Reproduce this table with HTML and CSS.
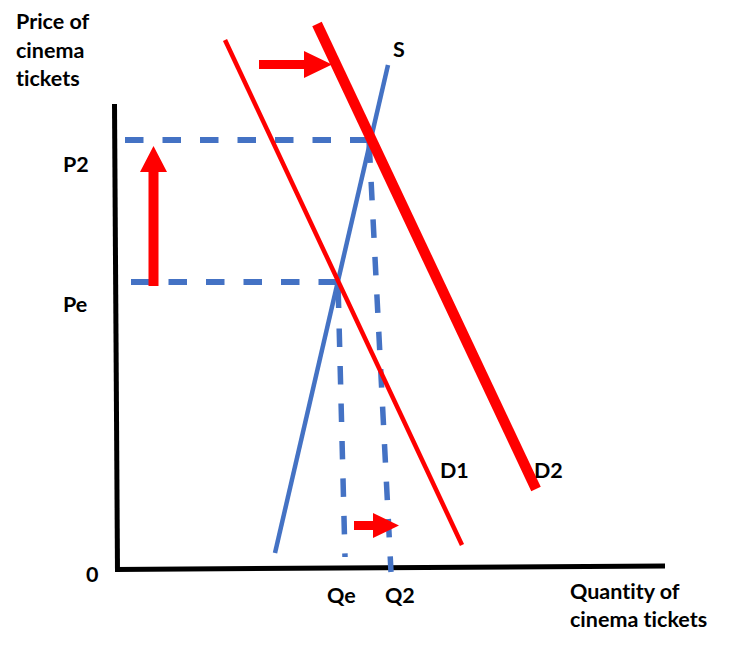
FILE: index.html
```html
<!DOCTYPE html>
<html lang="en">
<head>
<meta charset="utf-8">
<title>Price of cinema tickets</title>
<link rel="stylesheet" href="styles.css">
</head>
<body>
<div class="figure">
<svg class="chart" width="731" height="648" viewBox="0 0 731 648" xmlns="http://www.w3.org/2000/svg">
  <!-- axes -->
  <line class="axis" x1="114.5" y1="104" x2="117.5" y2="572"/>
  <line class="axis" x1="115" y1="569.5" x2="665" y2="566"/>

  <!-- dashed guide lines -->
  <line class="dash-h" x1="125" y1="140" x2="370" y2="140"/>
  <line class="dash-h" x1="131" y1="282" x2="340" y2="282"/>
  <line class="dash-v" x1="338" y1="282" x2="345" y2="557" stroke-dasharray="26 20.5 18.5 19 18.5 19 18.5 19 18.5 19 18.5 19 18.5 19 18.5 19"/>
  <line class="dash-v" x1="369" y1="140" x2="391" y2="572" stroke-dasharray="23 19 18.5 19 18.5 19 18.5 19 18.5 19 18.5 19 18.5 19 18.5 19 18.5 19 18.5 19 18.5 19 18.5 19"/>

  <!-- supply -->
  <line class="supply" x1="275" y1="553" x2="388" y2="65"/>

  <!-- demand curves -->
  <line class="d1" x1="225" y1="40" x2="462" y2="545"/>
  <line class="d2" x1="317" y1="24" x2="536" y2="489"/>

  <!-- arrows -->
  <polygon class="arrow" points="259,60 304,60 304,51 332,64.5 304,78 304,69 259,69"/>
  <polygon class="arrow" points="148.5,286 148.5,172 140,172 153.5,146 167,172 158.5,172 158.5,286"/>
  <polygon class="arrow" points="354,521 373,521 373,513 399,525.5 373,538 373,530 354,530"/>

  <!-- labels -->
  <text class="label" x="16" y="29">Price of</text>
  <text class="label" x="16" y="58">cinema</text>
  <text class="label" x="16" y="86">tickets</text>
  <text class="label" x="63" y="172">P2</text>
  <text class="label" x="63" y="312">Pe</text>
  <text class="label" x="86" y="582">0</text>
  <text class="label" x="327" y="603">Qe</text>
  <text class="label" x="385" y="603">Q2</text>
  <text class="label" x="393" y="57">S</text>
  <text class="label" x="440" y="478">D1</text>
  <text class="label" x="534" y="478">D2</text>
  <text class="label" x="570" y="599">Quantity of</text>
  <text class="label" x="570" y="627">cinema tickets</text>
</svg>
</div>
</body>
</html>
```

FILE: styles.css
```css
html, body {
  margin: 0;
  padding: 0;
  background: #ffffff;
}

.figure {
  width: 731px;
  height: 648px;
  overflow: hidden;
}

.chart {
  display: block;
}

.axis {
  stroke: #000000;
  stroke-width: 5;
}

.dash-h {
  stroke: #4472c4;
  stroke-width: 6;
  stroke-dasharray: 18.5 19;
}

.dash-v {
  stroke: #4472c4;
  stroke-width: 5.5;
}

.supply {
  stroke: #4472c4;
  stroke-width: 4.5;
}

.d1 {
  stroke: #ff0000;
  stroke-width: 4.5;
}

.d2 {
  stroke: #ff0000;
  stroke-width: 10.5;
}

.arrow {
  fill: #ff0000;
}

.label {
  font-family: Lato, "Open Sans", "Liberation Sans", sans-serif;
  font-weight: 700;
  font-size: 21.5px;
  font-variant-ligatures: none;
  fill: #000000;
}
```
